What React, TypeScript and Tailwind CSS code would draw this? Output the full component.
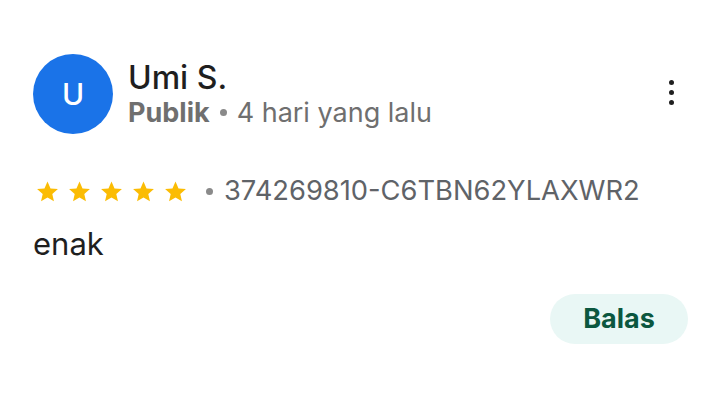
export default function App() {
  const stars = [0, 1, 2, 3, 4];

  return (
    <div className="w-[720px] h-[419px] bg-white font-['Inter',sans-serif] relative overflow-hidden">
      <div className="pt-[54px] pl-[33px] pr-[32px]">
        {/* Header */}
        <div className="flex items-start">
          <div className="w-[80px] h-[80px] rounded-full bg-[#1a73e8] flex items-center justify-center shrink-0">
            <span className="text-white text-[30px] font-medium">U</span>
          </div>
          <div className="ml-[15px] mt-[6px] flex-1">
            <div className="text-[32px] leading-[36px] font-medium text-[#1f1f1f]">Umi S.</div>
            <div className="text-[27px] leading-[33px] text-[#6f6f6f] flex items-center">
              <span className="font-bold">Publik</span>
              <span className="ml-[10px] mr-[10px] w-[7px] h-[7px] rounded-full bg-[#8a8a8a] inline-block"></span>
              <span>4 hari yang lalu</span>
            </div>
          </div>
          <div className="flex flex-col items-center gap-[5px] mt-[26px] mr-[14px]">
            <span className="w-[5px] h-[5px] rounded-full bg-[#1f1f1f]"></span>
            <span className="w-[5px] h-[5px] rounded-full bg-[#1f1f1f]"></span>
            <span className="w-[5px] h-[5px] rounded-full bg-[#1f1f1f]"></span>
          </div>
        </div>

        {/* Rating row */}
        <div className="mt-[41px] flex items-center">
          <div className="flex items-center gap-[7px] ml-[2px]">
            {stars.map((s) => (
              <svg key={s} width="25" height="25" viewBox="0 0 24 24">
                <path
                  d="M12 2.5l2.9 6.6 7.1.6-5.4 4.7 1.6 7-6.2-3.7-6.2 3.7 1.6-7L2 9.7l7.1-.6z"
                  fill="#fbbc04"
                />
              </svg>
            ))}
          </div>
          <span className="ml-[18px] w-[7px] h-[7px] rounded-full bg-[#8a8a8a] inline-block"></span>
          <span className="ml-[11px] text-[27.3px] leading-[32px] text-[#5f6368]">374269810-C6TBN62YLAXWR2</span>
        </div>

        {/* Body */}
        <div className="mt-[19px] text-[31px] leading-[36px] text-[#1f1f1f]">enak</div>

        {/* Reply button */}
        <div className="flex justify-end mt-[32px]">
          <button className="w-[138px] h-[50px] rounded-full bg-[#e9f7f5] text-[#0b573f] text-[27px] font-bold">
            Balas
          </button>
        </div>
      </div>
    </div>
  );
}
